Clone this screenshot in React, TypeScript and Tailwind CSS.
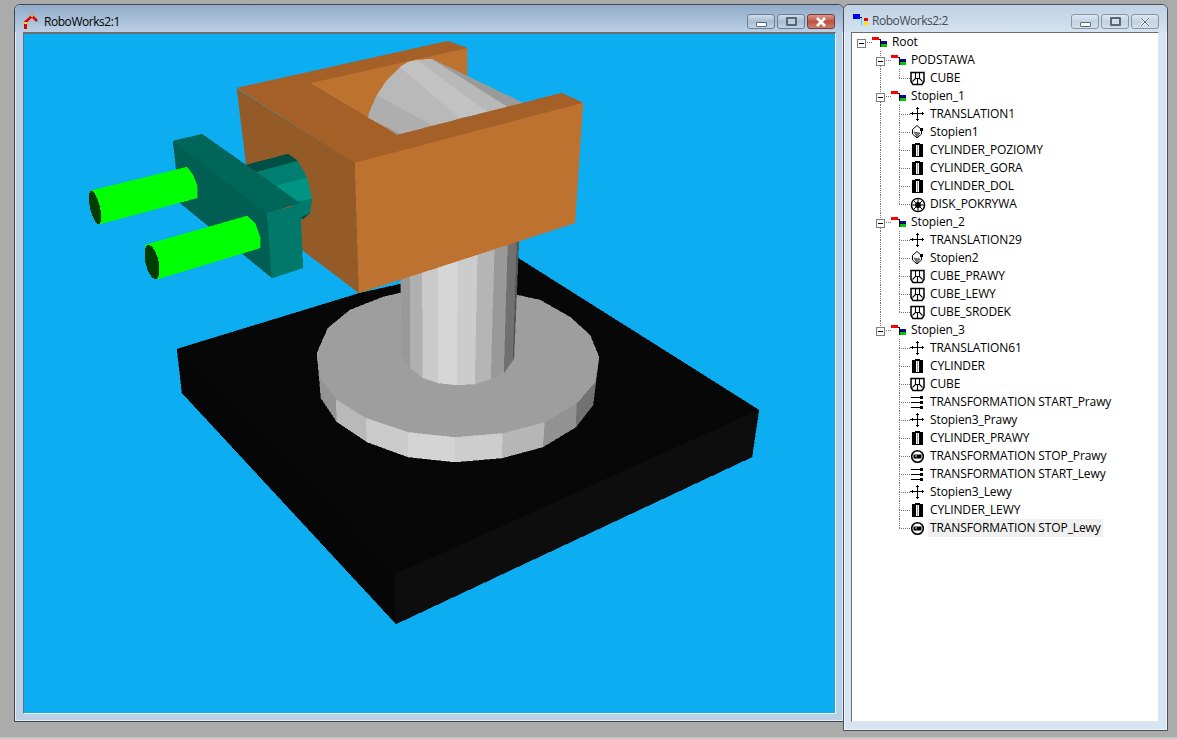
type Kind = "group" | "cube" | "move" | "shape" | "cyl" | "disk" | "start" | "stop";

type Node = { label: string; kind: Kind; level: 0 | 1 | 2; outer?: boolean; last?: boolean; selected?: boolean };

const nodes: Node[] = [
  { label: "Root", kind: "group", level: 0 },
  { label: "PODSTAWA", kind: "group", level: 1, outer: true },
  { label: "CUBE", kind: "cube", level: 2, outer: true, last: true },
  { label: "Stopien_1", kind: "group", level: 1, outer: true },
  { label: "TRANSLATION1", kind: "move", level: 2, outer: true },
  { label: "Stopien1", kind: "shape", level: 2, outer: true },
  { label: "CYLINDER_POZIOMY", kind: "cyl", level: 2, outer: true },
  { label: "CYLINDER_GORA", kind: "cyl", level: 2, outer: true },
  { label: "CYLINDER_DOL", kind: "cyl", level: 2, outer: true },
  { label: "DISK_POKRYWA", kind: "disk", level: 2, outer: true, last: true },
  { label: "Stopien_2", kind: "group", level: 1, outer: true },
  { label: "TRANSLATION29", kind: "move", level: 2, outer: true },
  { label: "Stopien2", kind: "shape", level: 2, outer: true },
  { label: "CUBE_PRAWY", kind: "cube", level: 2, outer: true },
  { label: "CUBE_LEWY", kind: "cube", level: 2, outer: true },
  { label: "CUBE_SRODEK", kind: "cube", level: 2, outer: true, last: true },
  { label: "Stopien_3", kind: "group", level: 1 },
  { label: "TRANSLATION61", kind: "move", level: 2 },
  { label: "CYLINDER", kind: "cyl", level: 2 },
  { label: "CUBE", kind: "cube", level: 2 },
  { label: "TRANSFORMATION START_Prawy", kind: "start", level: 2 },
  { label: "Stopien3_Prawy", kind: "move", level: 2 },
  { label: "CYLINDER_PRAWY", kind: "cyl", level: 2 },
  { label: "TRANSFORMATION STOP_Prawy", kind: "stop", level: 2 },
  { label: "TRANSFORMATION START_Lewy", kind: "start", level: 2 },
  { label: "Stopien3_Lewy", kind: "move", level: 2 },
  { label: "CYLINDER_LEWY", kind: "cyl", level: 2 },
  { label: "TRANSFORMATION STOP_Lewy", kind: "stop", level: 2, last: true, selected: true },
];

function NodeIcon({ kind }: { kind: Kind }) {
  if (kind === "group") {
    return (
      <svg width="19" height="18" viewBox="0 0 19 18" shapeRendering="crispEdges" className="shrink-0">
        <rect x="0" y="4" width="7" height="3" fill="#ff0000" />
        <rect x="7" y="6" width="2" height="1" fill="#000" />
        <rect x="8" y="7" width="1" height="7" fill="#000" />
        <rect x="9" y="8" width="6" height="3" fill="#0000c8" />
        <rect x="9" y="11" width="6" height="3" fill="#00c800" />
        <rect x="9" y="10" width="6" height="1" fill="#000" />
      </svg>
    );
  }
  if (kind === "cube") {
    return (
      <svg width="19" height="18" viewBox="0 0 19 18" fill="none" stroke="#000" className="shrink-0">
        <path d="M1 3.6 H14 V12.5 L12 15.4 H3 L1 12.5 Z" strokeWidth="1.5" />
        <path d="M5.5 3.5 V9.5 L2.5 12.5 M9.5 3.5 V9.5 L12.5 12.5 M5.5 9.5 H9.5 M7.5 9.5 V15" strokeWidth="1.1" />
      </svg>
    );
  }
  if (kind === "move") {
    return (
      <svg width="19" height="18" viewBox="0 0 19 18" fill="none" stroke="#000" shapeRendering="crispEdges" className="shrink-0">
        <path d="M0 8.5 H14 M7.5 2 V16" />
        <path d="M6 3.5 H9 M6 14.5 H9 M2.5 7 V10 M12.5 7 V10" />
      </svg>
    );
  }
  if (kind === "shape") {
    return (
      <svg width="19" height="18" viewBox="0 0 19 18" fill="none" stroke="#000" className="shrink-0">
        <path d="M7 2.5 L11.5 6.5 L11.5 11 L7 15 L2.5 11 L2.5 6.5 Z" strokeWidth="1" />
        <path d="M4 9 L7 14 L10 10 Z" fill="#777" stroke="#555" strokeWidth="0.8" />
        <rect x="10" y="5" width="3" height="3" fill="#000" stroke="none" />
      </svg>
    );
  }
  if (kind === "cyl") {
    return (
      <svg width="19" height="18" viewBox="0 0 19 18" shapeRendering="crispEdges" className="shrink-0">
        <rect x="2" y="3" width="11" height="13" fill="#000" />
        <rect x="5" y="2" width="5" height="1" fill="#000" />
        <rect x="6" y="4" width="1" height="11" fill="#fff" />
        <rect x="7" y="4" width="1" height="11" fill="#999" />
        <rect x="8" y="4" width="1" height="11" fill="#fff" />
      </svg>
    );
  }
  if (kind === "disk") {
    return (
      <svg width="19" height="18" viewBox="0 0 19 18" fill="none" stroke="#000" className="shrink-0">
        <circle cx="8" cy="10" r="6.6" strokeWidth="1.4" />
        <path d="M1.5 10 H14.5 M8 3.5 V16.5 M3.5 5.5 L12.5 14.5 M12.5 5.5 L3.5 14.5" strokeWidth="1" />
        <circle cx="8" cy="10" r="2.6" fill="#000" />
      </svg>
    );
  }
  if (kind === "start") {
    return (
      <svg width="19" height="18" viewBox="0 0 19 18" shapeRendering="crispEdges" className="shrink-0">
        <rect x="1" y="4" width="12" height="1" fill="#000" />
        <rect x="1" y="9" width="12" height="1" fill="#000" />
        <rect x="1" y="14" width="12" height="1" fill="#000" />
        <rect x="10" y="3" width="3" height="3" fill="#000" />
        <rect x="10" y="8" width="3" height="3" fill="#000" />
        <rect x="10" y="13" width="3" height="3" fill="#000" />
      </svg>
    );
  }
  return (
    <svg width="19" height="18" viewBox="0 0 19 18" fill="none" className="shrink-0">
      <circle cx="7.5" cy="9.5" r="5.8" stroke="#000" strokeWidth="1.6" />
      <rect x="3.5" y="7.5" width="8" height="4" fill="#000" />
      <rect x="5" y="8.5" width="2" height="1" fill="#fff" />
    </svg>
  );
}

function Expander() {
  return (
    <div className="w-[9px] h-[9px] border border-[#7d7d7d] bg-white flex items-center justify-center">
      <div className="w-[5px] h-px bg-black" />
    </div>
  );
}

// one indent column of the tree, with its dotted guide lines
function Guide({ up, down, across, box }: { up?: boolean; down?: boolean; across?: boolean; box?: boolean }) {
  return (
    <div className="relative w-[19px] h-[18px] shrink-0">
      {up && <div className="absolute left-[8px] top-0 h-[9px] border-l border-dotted border-[#777]" />}
      {down && <div className="absolute left-[8px] top-[9px] h-[9px] border-l border-dotted border-[#777]" />}
      {across && <div className="absolute left-[8px] top-[9px] w-[11px] border-t border-dotted border-[#777]" />}
      {box && (
        <div className="absolute left-[4px] top-[6px]">
          <Expander />
        </div>
      )}
    </div>
  );
}

function TreeRow({ node }: { node: Node }) {
  return (
    <div className="flex h-[18px] items-center">
      {node.level === 0 && <Guide across box />}
      {node.level === 1 && (
        <>
          <Guide />
          <Guide up down={node.outer} across box />
        </>
      )}
      {node.level === 2 && (
        <>
          <Guide />
          <Guide up={node.outer} down={node.outer} />
          <Guide up down={!node.last} across />
        </>
      )}
      <NodeIcon kind={node.kind} />
      <span
        className={
          node.selected
            ? "-ml-px bg-[#f0f0f0] pl-0.5 pr-0.5 h-[18px] leading-[17px] text-[12px] whitespace-nowrap text-black tracking-[-0.11px]"
            : "ml-px h-[18px] leading-[17px] text-[12px] whitespace-nowrap text-black tracking-[-0.11px]"
        }
      >
        {node.label}
      </span>
    </div>
  );
}

function CaptionButtons({ active }: { active?: boolean }) {
  const base = "h-[15px] rounded-[3px] border flex items-center justify-center";
  const normal = active
    ? "border-[#6d7f94] bg-gradient-to-b from-[#cfdcea] via-[#a9bdd3] to-[#c1d2e3]"
    : "border-[#8597ab] bg-gradient-to-b from-[#dde7f1] via-[#c3d3e3] to-[#d2dfec]";
  return (
    <div className="flex gap-[2px]">
      <div className={`${base} ${normal} w-[28px]`}>
        <div className="w-[11px] h-[5px] mt-[5px] bg-white border border-[#5a6675] rounded-[1px]" />
      </div>
      <div className={`${base} ${normal} w-[28px]`}>
        <div className="w-[11px] h-[9px] bg-white/20 border-2 border-[#5a6675] rounded-[1px]" />
      </div>
      <div
        className={`${base} w-[28px] ${
          active
            ? "border-[#7d3a33] bg-gradient-to-b from-[#d99a8f] via-[#c0503f] to-[#c97d6f]"
            : normal
        }`}
      >
        <svg width="12" height="10" viewBox="0 0 12 10">
          <path d="M2 1 L10 9 M10 1 L2 9" stroke={active ? "#fff" : "#eef2f6"} strokeWidth="2.6" />
          {!active && <path d="M2 1 L10 9 M10 1 L2 9" stroke="#5a6675" strokeWidth="1" />}
        </svg>
      </div>
    </div>
  );
}

function Poly({ p, c }: { p: string; c: string }) {
  return <polygon points={p} fill={c} stroke={c} strokeWidth="0.4" />;
}

function Scene() {
  return (
    <svg viewBox="24 34 811 679" className="block w-[811px] h-[679px]" shapeRendering="crispEdges">
      <rect x="24" y="34" width="811" height="679" fill="#0dadf2" />

      {/* base plate */}
      <Poly p="177,349 360,293 518,258 759,410 394,575" c="#070707" />
      <Poly p="177,349 394,575 396,624 182,393" c="#060606" />
      <Poly p="394,575 759,410 752,457 396,624" c="#0d0d0d" />

      {/* disk side facets */}
      <Poly p="317,353 320,377 336,399 337,422 321,398" c="#949494" />
      <Poly p="336,399 366,418 367,442 337,422" c="#b9b9b9" />
      <Poly p="366,418 408,432 408,457 367,442" c="#cbcbcb" />
      <Poly p="408,432 455,437 455,462 408,457" c="#d4d4d4" />
      <Poly p="455,437 503,433 502,458 455,462" c="#cdcdcd" />
      <Poly p="503,433 545,422 543,447 502,458" c="#b6b6b6" />
      <Poly p="545,422 577,403 576,427 543,447" c="#929292" />
      <Poly p="577,403 595,382 599,357 593,405 576,427" c="#727272" />
      {/* disk top */}
      <Poly
        p="317,353 328,328 350,310 383,297 400,293 517,295 540,300 570,317 590,335 599,357 595,382 577,403 545,422 503,433 455,437 408,432 366,418 336,399 320,377"
        c="#9e9e9e"
      />

      {/* column */}
      <Poly p="400,240 410,240 410,368 402,355" c="#999999" />
      <Poly p="410,240 422,240 423,378 410,368" c="#b0b0b0" />
      <Poly p="422,240 438,240 438,383 423,378" c="#cacaca" />
      <Poly p="438,240 458,240 457,385 438,383" c="#d6d6d6" />
      <Poly p="458,240 478,240 475,384 457,385" c="#cccccc" />
      <Poly p="478,240 495,240 491,379 475,384" c="#b5b5b5" />
      <Poly p="495,240 508,240 504,373 491,379" c="#999999" />
      <Poly p="508,240 517,240 513,360 504,373" c="#707070" />
      <Poly p="517,240 519,240 514,357 513,360" c="#555555" />

      {/* orange bracket */}
      <Poly p="237,89 355,163 359,293 252,212" c="#945a28" />
      <Poly p="310,83 467,48 467,117 397,135" c="#be7230" />
      {/* inner cylinder */}
      <Poly p="368,114 397,135 403,135 372,108" c="#9a9a9a" />
      <Poly p="368,118 372,106 377,95 435,127 403,135" c="#aeaeae" />
      <Poly p="377,95 387,80 400,67 460,118 435,127" c="#b9b9b9" />
      <Poly p="400,67 408,62 417,60 488,112 460,118" c="#c2c2c2" />
      <Poly p="417,60 432,59 508,107 488,112" c="#b8b8b8" />
      <Poly p="432,59 523,103 508,107" c="#9a9a9a" />
      {/* bracket rim and front */}
      <Poly p="237,88 448,41 467,48 310,83 397,135 562,93 583,103 355,163" c="#a56028" />
      <Poly p="355,163 583,103 575,223 359,293" c="#bd7230" />

      {/* teal hub */}
      <Poly p="246,165 288,154 298,161 257,172" c="#004f45" />
      <Poly p="257,172 298,161 307,178 275,186" c="#007f70" />
      <Poly p="275,186 307,178 312,199 297,203" c="#009484" />
      <Poly p="290,203 312,199 310,213 300,218" c="#007a6c" />
      <Poly p="300,218 310,213 303,219" c="#004f45" />
      {/* teal plate */}
      <Poly p="173,141 267,213 272,278 180,203" c="#005e52" />
      <Poly p="173,141 202,134 300,203 267,213" c="#00665a" />
      <Poly p="267,213 300,205 303,268 272,278" c="#00796b" />

      {/* green rods */}
      <Poly p="90,191 187,167 193,175 197,185 197,198 100,224" c="#00ff00" />
      <ellipse cx="95" cy="207.5" rx="5" ry="17" transform="rotate(-13 95 207.5)" fill="#003d00" />
      <Poly p="145,245 247,216 255,223 260,237 260,248 158,279" c="#00ff00" />
      <ellipse cx="152" cy="262" rx="6.5" ry="17.5" transform="rotate(-13 152 262)" fill="#003d00" />
    </svg>
  );
}

export default function App() {
  return (
    <div
      className="relative w-[1177px] h-[739px] overflow-hidden bg-[#ababab]"
      style={{ fontFamily: '"Open Sans", "Liberation Sans", sans-serif' }}
    >
      <div className="absolute left-0 bottom-0 w-full h-[2px] bg-[#c4c4c4]" />

      {/* 3D view window */}
      <div className="absolute left-[14px] top-[4px] w-[830px] h-[718px] flex flex-col rounded-t-[6px] border border-[#3f4650] bg-[#b9d0e6] shadow-[inset_0_0_0_1px_rgba(255,255,255,0.6)]">
        <div className="h-[27px] shrink-0 flex items-center px-[8px] rounded-t-[6px] bg-gradient-to-b from-[#93abc8] to-[#bbd0e6]">
          <svg width="16" height="16" viewBox="0 0 16 16" className="mt-[7px] shrink-0">
            <rect x="1" y="7" width="3" height="8" fill="#e60000" shapeRendering="crispEdges" />
            <path d="M2.5 8 L9 2 L14 7" fill="none" stroke="#e60000" strokeWidth="2.6" />
            <rect x="1" y="8" width="3" height="2" fill="#ffd800" shapeRendering="crispEdges" />
            <rect x="8" y="1" width="2" height="2" fill="#ffd800" shapeRendering="crispEdges" />
            <rect x="14" y="7" width="2" height="2" fill="#2fe6e6" shapeRendering="crispEdges" />
          </svg>
          <span className="ml-[5px] text-[12px] text-black tracking-[-0.45px] mt-[6px]">RoboWorks2:1</span>
          <div className="ml-auto mt-[6px]">
            <CaptionButtons active />
          </div>
        </div>
        <div className="ml-[8px] mr-[7px] mb-[7px] w-fit border-t-2 border-l border-t-[#6d6d6d] border-l-[#6d6d6d] border-r border-b border-r-white border-b-white overflow-hidden">
          <Scene />
        </div>
      </div>

      {/* tree window */}
      <div className="absolute left-[843px] top-[4px] w-[325px] h-[727px] flex flex-col rounded-t-[6px] border border-[#4a4f57] bg-[#d6e4f3] shadow-[inset_0_0_0_1px_rgba(255,255,255,0.6)]">
        <div className="h-[27px] shrink-0 flex items-center pl-[9px] pr-[8px] rounded-t-[6px] bg-gradient-to-b from-[#bfd1e3] to-[#d5e3f0]">
          <svg width="16" height="16" viewBox="0 0 16 16" shapeRendering="crispEdges" className="mt-[3px] shrink-0">
            <rect x="0" y="2" width="7" height="5" fill="#0000f0" />
            <rect x="7" y="5" width="2" height="1" fill="#000" />
            <rect x="8" y="6" width="1" height="7" fill="#20e0e0" />
            <rect x="11" y="6" width="4" height="3" fill="#e60000" />
            <rect x="11" y="10" width="4" height="3" fill="#ffe600" />
          </svg>
          <span className="ml-[3px] text-[12px] text-[#434a54] tracking-[-0.45px] mt-[5px]">RoboWorks2:2</span>
          <div className="ml-auto mt-[6px]">
            <CaptionButtons />
          </div>
        </div>
        <div className="flex-1 ml-[7px] mr-[8px] mb-[8px] bg-white border-t border-l border-t-[#6d6d6d] border-l-[#6d6d6d] border-r border-b border-r-[#e4e4e4] border-b-[#e4e4e4] pl-[1px]">
          {nodes.map((node, i) => (
            <TreeRow key={i} node={node} />
          ))}
        </div>
      </div>
    </div>
  );
}
